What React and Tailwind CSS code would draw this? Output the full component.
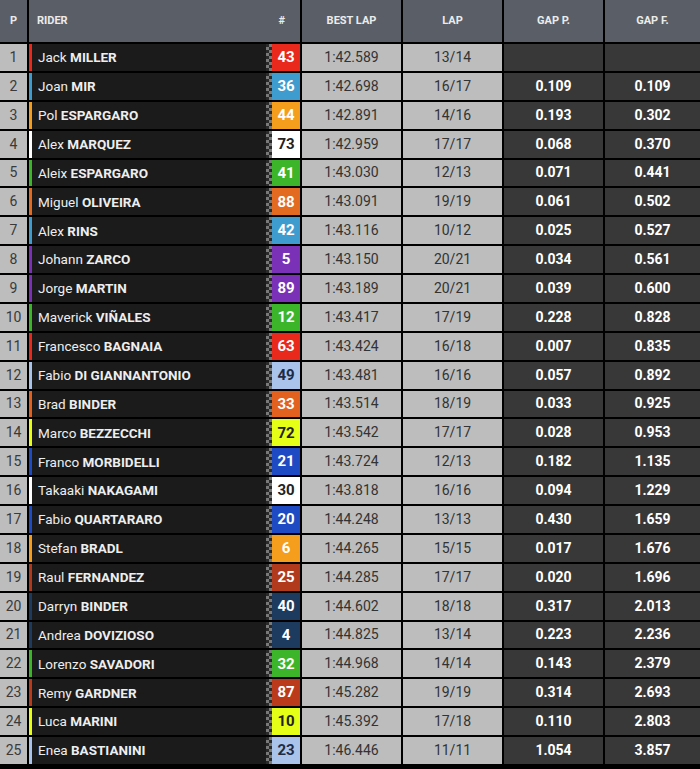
const riders = [
  ["Jack", "MILLER", "43", "#e8291c", "#fff", "1:42.589", "13/14", "", ""],
  ["Joan", "MIR", "36", "#3f9ccf", "#fff", "1:42.698", "16/17", "0.109", "0.109"],
  ["Pol", "ESPARGARO", "44", "#f59d1c", "#fff", "1:42.891", "14/16", "0.193", "0.302"],
  ["Alex", "MARQUEZ", "73", "#ffffff", "#222", "1:42.959", "17/17", "0.068", "0.370"],
  ["Aleix", "ESPARGARO", "41", "#3db52a", "#fff", "1:43.030", "12/13", "0.071", "0.441"],
  ["Miguel", "OLIVEIRA", "88", "#e36a21", "#fff", "1:43.091", "19/19", "0.061", "0.502"],
  ["Alex", "RINS", "42", "#3f9ccf", "#fff", "1:43.116", "10/12", "0.025", "0.527"],
  ["Johann", "ZARCO", "5", "#7b31b7", "#fff", "1:43.150", "20/21", "0.034", "0.561"],
  ["Jorge", "MARTIN", "89", "#7b31b7", "#fff", "1:43.189", "20/21", "0.039", "0.600"],
  ["Maverick", "VIÑALES", "12", "#3db52a", "#fff", "1:43.417", "17/19", "0.228", "0.828"],
  ["Francesco", "BAGNAIA", "63", "#e8291c", "#fff", "1:43.424", "16/18", "0.007", "0.835"],
  ["Fabio", "DI GIANNANTONIO", "49", "#a9c3ea", "#1e2a44", "1:43.481", "16/16", "0.057", "0.892"],
  ["Brad", "BINDER", "33", "#e3611f", "#fff", "1:43.514", "18/19", "0.033", "0.925"],
  ["Marco", "BEZZECCHI", "72", "#e5ff17", "#222", "1:43.542", "17/17", "0.028", "0.953"],
  ["Franco", "MORBIDELLI", "21", "#1e4bc4", "#fff", "1:43.724", "12/13", "0.182", "1.135"],
  ["Takaaki", "NAKAGAMI", "30", "#ffffff", "#222", "1:43.818", "16/16", "0.094", "1.229"],
  ["Fabio", "QUARTARARO", "20", "#1e4bc4", "#fff", "1:44.248", "13/13", "0.430", "1.659"],
  ["Stefan", "BRADL", "6", "#f59d1c", "#fff", "1:44.265", "15/15", "0.017", "1.676"],
  ["Raul", "FERNANDEZ", "25", "#b23a1c", "#fff", "1:44.285", "17/17", "0.020", "1.696"],
  ["Darryn", "BINDER", "40", "#1d3b5f", "#fff", "1:44.602", "18/18", "0.317", "2.013"],
  ["Andrea", "DOVIZIOSO", "4", "#1d3b5f", "#fff", "1:44.825", "13/14", "0.223", "2.236"],
  ["Lorenzo", "SAVADORI", "32", "#3db52a", "#fff", "1:44.968", "14/14", "0.143", "2.379"],
  ["Remy", "GARDNER", "87", "#bb3a1b", "#fff", "1:45.282", "19/19", "0.314", "2.693"],
  ["Luca", "MARINI", "10", "#e5ff17", "#222", "1:45.392", "17/18", "0.110", "2.803"],
  ["Enea", "BASTIANINI", "23", "#a9c3ea", "#1e2a44", "1:46.446", "11/11", "1.054", "3.857"],
];

const Header = ({ children, className = "" }) => (
  <div className={"bg-[#5a5f67] flex items-center text-[11px] font-bold text-[#ececec] " + className}>
    {children}
  </div>
);

const App = () => {
  return (
    <div
      className="w-[700px] h-[769px] bg-black"
      style={{ fontFamily: "Roboto, 'Noto Sans', sans-serif" }}
    >
      <div className="grid grid-cols-[27px_271px_99px_99px_99px_1fr] grid-rows-[42px] auto-rows-[26.875px] gap-x-[2px] gap-y-[2px]">
        <Header className="justify-center">P</Header>
        <Header className="pl-[8px] justify-between pr-[15px]">
          <span>RIDER</span>
          <span>#</span>
        </Header>
        <Header className="justify-center">BEST LAP</Header>
        <Header className="justify-center">LAP</Header>
        <Header className="justify-center">GAP P.</Header>
        <Header className="justify-center">GAP F.</Header>

        {riders.map((r, i) => (
          <div key={i} className="contents">
            <div className="bg-[#bdbdbd] text-[#3a3a3a] text-[14px] flex items-center justify-center">
              {i + 1}
            </div>
            <div className="flex bg-[#1b1b1b]">
              <div className="w-[3px]" style={{ background: r[3] }} />
              <div className="flex-1 flex items-center pl-[6px] text-[13.5px] text-[#eeeeee] whitespace-nowrap">
                <span>{r[0]}&nbsp;</span>
                <span className="font-bold">{r[1]}</span>
              </div>
              <div className="w-[6px] bg-[conic-gradient(#7a7a7a_25%,#2a2a2a_0_50%,#7a7a7a_0_75%,#2a2a2a_0)] bg-[length:6px_6px]" />
              <div
                className="w-[28px] flex items-center justify-center text-[15px] font-bold"
                style={{ background: r[3], color: r[4] }}
              >
                {r[2]}
              </div>
            </div>
            <div className="bg-[#bdbdbd] text-[#333] text-[14px] flex items-center justify-center">
              {r[5]}
            </div>
            <div className="bg-[#bdbdbd] text-[#333] text-[14px] flex items-center justify-center">
              {r[6]}
            </div>
            <div className="bg-[#383838] text-white text-[14px] font-bold flex items-center justify-center">
              {r[7]}
            </div>
            <div className="bg-[#383838] text-white text-[14px] font-bold flex items-center justify-center">
              {r[8]}
            </div>
          </div>
        ))}
      </div>
    </div>
  );
};

export default App;
